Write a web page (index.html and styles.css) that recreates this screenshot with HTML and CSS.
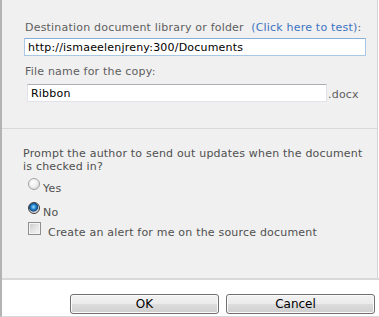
FILE: index.html
```html
<!DOCTYPE html>
<html lang="en">
<head>
    <meta charset="UTF-8">
    <title>Send To Other Location</title>
    <link rel="stylesheet" href="styles.css">
</head>
<body>

    <div class="dialog">
        <div class="panel">
            <div class="section destination">
                <div class="label">Destination document library or folder&nbsp; <a class="test-link">(Click here to test)</a>:</div>
                <input class="text-box url" type="text" value="http://ismaeelenjreny:300/Documents">
                <div class="label file-label">File name for the copy:</div>
                <div class="file-row">
                    <input class="text-box file-name" type="text" value="Ribbon">
                    <span class="ext">.docx</span>
                </div>
            </div>

            <div class="section options">
                <div class="question">Prompt the author to send out updates when the document is checked in?</div>
                <div class="choice yes"><span class="radio"></span><span class="choice-text">Yes</span></div>
                <div class="choice no"><span class="radio checked"></span><span class="choice-text">No</span></div>
                <div class="choice alert"><span class="checkbox"></span><span class="choice-text">Create an alert for me on the source document</span></div>
            </div>
        </div>

        <div class="footer">
            <button class="btn" type="button">OK</button>
            <button class="btn cancel" type="button">Cancel</button>
        </div>
    </div>

</body>
</html>
```

FILE: styles.css
```css
body {
    margin: 0;
    padding: 0;
    font-family: "DejaVu Sans", Verdana, sans-serif;
    font-size: 11px;
    letter-spacing: 0.2px;
    color: #5e5e5e;
    background-color: #fff;
}

.dialog {
    height: 316px;
    border-left: 2px solid #b3b3b3;
    border-bottom: 1px solid #d8d8d8;
}

.panel {
    height: 278px;
    margin-right: 1px;
    background-color: #f0f0f0;
    border-right: 1px solid #d4d4d4;
}

.section {
    box-sizing: border-box;
}

/* top block: destination + file name */
.destination {
    height: 129px;
    padding: 21px 0 0 22px;
    border-bottom: 1px solid #d9d9d9;
}

.label {
    padding-left: 1px;
    line-height: 14px;
}

.test-link {
    color: #3b72c2;
    cursor: pointer;
}

.text-box {
    box-sizing: border-box;
    display: block;
    height: 18px;
    margin: 0;
    padding: 0 3px;
    font-family: "DejaVu Sans", Verdana, sans-serif;
    font-size: 11px;
    letter-spacing: 0.2px;
    color: #000;
    background-color: #fff;
    outline: none;
}

.url {
    width: 342px;
    margin-top: 3px;
    border: 1px solid #a9c8e6;
    border-top-color: #86afd8;
}

.file-label {
    margin-top: 9px;
}

.file-row {
    display: flex;
    align-items: center;
    margin-top: 5px;
    padding-left: 3px;
}

.file-name {
    width: 300px;
    border: 1px solid #e2e3ea;
    border-top-color: #abadb3;
}

.ext {
    margin-left: 1px;
    padding-top: 2px;
}

/* bottom block: prompt + alert */
.options {
    padding: 18px 0 0 21px;
}

.question {
    width: 345px;
    line-height: 13px;
    color: #4f4f4f;
}

.choice {
    display: flex;
    align-items: flex-start;
    padding-left: 5px;
    color: #4f4f4f;
}

.choice-text {
    margin-top: 4px;
    line-height: 13px;
}

.yes {
    margin-top: 5px;
}

.no {
    margin-top: 7px;
}

.alert {
    margin-top: 3px;
}

.radio {
    box-sizing: border-box;
    width: 12px;
    height: 12px;
    margin-right: 3px;
    border: 1px solid #a2a2a2;
    border-radius: 50%;
    background: radial-gradient(circle at 40% 35%, #ffffff 0%, #f0f0f0 45%, #d0d0d0 100%);
}

.radio.checked {
    border-color: #3c3c3c;
    background: radial-gradient(circle at 45% 40%, #a6dcf6 0%, #2a8ad4 28%, #0d4a86 52%, #cfcfcf 60%, #f4f4f4 100%);
}

.checkbox {
    box-sizing: border-box;
    width: 13px;
    height: 13px;
    margin-right: 7px;
    border: 1px solid #8f8f8f;
    background: linear-gradient(135deg, #c8c8c8 0%, #e4e4e4 50%, #f7f7f7 100%);
    box-shadow: inset 0 0 0 1px #f4f4f4;
}

/* footer with buttons */
.footer {
    display: flex;
    justify-content: flex-end;
    gap: 7px;
    padding: 14px 4px 0 0;
    border-top: 2px solid #d9d9d9;
}

.btn {
    width: 149px;
    height: 20px;
    padding: 0;
    font-family: "DejaVu Sans", Tahoma, sans-serif;
    font-size: 12px;
    letter-spacing: 0;
    color: #000;
    border: 1px solid #707070;
    border-radius: 3px;
    background: linear-gradient(#f2f2f2 0%, #ebebeb 50%, #dddddd 50%, #cfcfcf 100%);
    box-shadow: inset 0 0 0 1px #fbfbfb;
    cursor: pointer;
}

.cancel {
    padding-right: 10px;
}
```
